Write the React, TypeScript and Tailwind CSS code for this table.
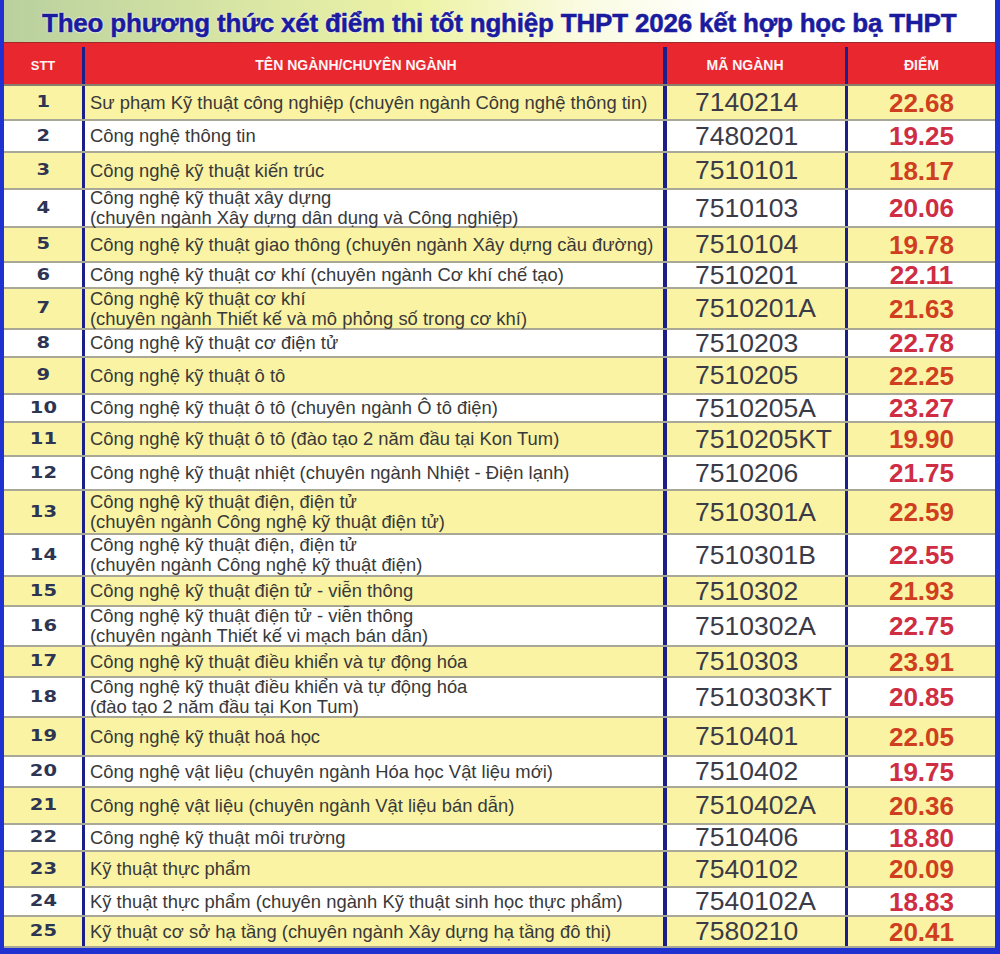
import React from "react";

type Row = {
  stt: string;
  name: string[];
  code: string;
  score: string;
  h: string;
};

const rows: Row[] = [
  { stt: "1", name: ["Sư phạm Kỹ thuật công nghiệp (chuyên ngành Công nghệ thông tin)"], code: "7140214", score: "22.68", h: "h-[35px]" },
  { stt: "2", name: ["Công nghệ thông tin"], code: "7480201", score: "19.25", h: "h-[32px]" },
  { stt: "3", name: ["Công nghệ kỹ thuật kiến trúc"], code: "7510101", score: "18.17", h: "h-[37px]" },
  { stt: "4", name: ["Công nghệ kỹ thuật xây dựng", "(chuyên ngành Xây dựng dân dụng và Công nghiệp)"], code: "7510103", score: "20.06", h: "h-[38px]" },
  { stt: "5", name: ["Công nghệ kỹ thuật giao thông (chuyên ngành Xây dựng cầu đường)"], code: "7510104", score: "19.78", h: "h-[35px]" },
  { stt: "6", name: ["Công nghệ kỹ thuật cơ khí (chuyên ngành Cơ khí chế tạo)"], code: "7510201", score: "22.11", h: "h-[26px]" },
  { stt: "7", name: ["Công nghệ kỹ thuật cơ khí", "(chuyên ngành Thiết kế và mô phỏng số trong cơ khí)"], code: "7510201A", score: "21.63", h: "h-[41px]" },
  { stt: "8", name: ["Công nghệ kỹ thuật cơ điện tử"], code: "7510203", score: "22.78", h: "h-[28px]" },
  { stt: "9", name: ["Công nghệ kỹ thuật ô tô"], code: "7510205", score: "22.25", h: "h-[37px]" },
  { stt: "10", name: ["Công nghệ kỹ thuật ô tô (chuyên ngành Ô tô điện)"], code: "7510205A", score: "23.27", h: "h-[28px]" },
  { stt: "11", name: ["Công nghệ kỹ thuật ô tô (đào tạo 2 năm đầu tại Kon Tum)"], code: "7510205KT", score: "19.90", h: "h-[34px]" },
  { stt: "12", name: ["Công nghệ kỹ thuật nhiệt (chuyên ngành Nhiệt - Điện lạnh)"], code: "7510206", score: "21.75", h: "h-[34px]" },
  { stt: "13", name: ["Công nghệ kỹ thuật điện, điện tử", "(chuyên ngành Công nghệ kỹ thuật điện tử)"], code: "7510301A", score: "22.59", h: "h-[44px]" },
  { stt: "14", name: ["Công nghệ kỹ thuật điện, điện tử", "(chuyên ngành Công nghệ kỹ thuật điện)"], code: "7510301B", score: "22.55", h: "h-[42px]" },
  { stt: "15", name: ["Công nghệ kỹ thuật điện tử - viễn thông"], code: "7510302", score: "21.93", h: "h-[30px]" },
  { stt: "16", name: ["Công nghệ kỹ thuật điện tử - viễn thông", "(chuyên ngành Thiết kế vi mạch bán dẫn)"], code: "7510302A", score: "22.75", h: "h-[40px]" },
  { stt: "17", name: ["Công nghệ kỹ thuật điều khiển và tự động hóa"], code: "7510303", score: "23.91", h: "h-[31px]" },
  { stt: "18", name: ["Công nghệ kỹ thuật điều khiển và tự động hóa", "(đào tạo 2 năm đầu tại Kon Tum)"], code: "7510303KT", score: "20.85", h: "h-[40px]" },
  { stt: "19", name: ["Công nghệ kỹ thuật hoá học"], code: "7510401", score: "22.05", h: "h-[39px]" },
  { stt: "20", name: ["Công nghệ vật liệu (chuyên ngành Hóa học Vật liệu mới)"], code: "7510402", score: "19.75", h: "h-[31px]" },
  { stt: "21", name: ["Công nghệ vật liệu (chuyên ngành Vật liệu bán dẫn)"], code: "7510402A", score: "20.36", h: "h-[37px]" },
  { stt: "22", name: ["Công nghệ kỹ thuật môi trường"], code: "7510406", score: "18.80", h: "h-[27px]" },
  { stt: "23", name: ["Kỹ thuật thực phẩm"], code: "7540102", score: "20.09", h: "h-[36px]" },
  { stt: "24", name: ["Kỹ thuật thực phẩm (chuyên ngành Kỹ thuật sinh học thực phẩm)"], code: "7540102A", score: "18.83", h: "h-[29px]" },
  { stt: "25", name: ["Kỹ thuật cơ sở hạ tầng (chuyên ngành Xây dựng hạ tầng đô thị)"], code: "7580210", score: "20.41", h: "h-[31px]" },
];

export default function App() {
  return (
    <div
      className="w-[1000px] h-[954px] overflow-hidden border-l-4 border-r-[5px] border-b-[6px] border-[#1f31d0] bg-white"
      style={{ fontFamily: '"Liberation Sans", Arial, sans-serif' }}
    >
      {/* Title */}
      <div className="h-[42px] flex items-center pt-[4px] pl-[38px] bg-[linear-gradient(90deg,#b9d09e_0%,#d6e4a4_22%,#edf3a6_42%,#fafbe0_58%,#ffffff_72%)]">
        <div className="text-[26px] font-bold text-[#1b1b9e] whitespace-nowrap tracking-[-0.2px] [-webkit-text-stroke:0.5px_#1b1b9e] [text-shadow:0_0_2px_#ffffff,0_0_2px_#ffffff,0_0_1px_#ffffff]">
          Theo phương thức xét điểm thi tốt nghiệp THPT 2026 kết hợp học bạ THPT
        </div>
      </div>

      {/* Header */}
      <div className="h-[44px] flex bg-[#e8272f] border-t border-[#9e2a2a] border-b-2 border-b-[#8a7f6e] text-[#fff4f4] font-bold text-[14px] pt-[4px]">
        <div className="w-[81px] border-r-[3px] border-[#1c1f8a] flex items-center justify-center text-[13px]">STT</div>
        <div className="w-[582px] border-r-4 border-[#1c1f8a] flex items-center justify-center pr-[36px]">TÊN NGÀNH/CHUYÊN NGÀNH</div>
        <div className="w-[181px] border-r-[3px] border-[#1c1f8a] flex items-center justify-center pr-[22px]">MÃ NGÀNH</div>
        <div className="flex-1 flex items-center justify-center">ĐIỂM</div>
      </div>

      {/* Rows */}
      {rows.map((r, i) => {
        const yellow = i % 2 === 0;
        return (
          <div
            key={r.stt}
            className={`${r.h} flex border-b-2 border-[#a9a795] ${yellow ? "bg-[#faf3a4]" : "bg-white"}`}
          >
            <div className="w-[81px] border-r-[3px] border-[#1c1f8a] flex items-center justify-center">
              <span
                className="inline-block scale-x-[1.3] text-[15px] font-bold text-[#2d3552]"
                style={{ fontFamily: '"DejaVu Sans", sans-serif' }}
              >
                {r.stt}
              </span>
            </div>
            <div className="w-[582px] border-r-4 border-[#1c1f8a] flex flex-col justify-center pl-[5px] text-[18.4px] leading-[20px] text-[#393939] whitespace-nowrap">
              {r.name.map((n) => (
                <div key={n}>{n}</div>
              ))}
            </div>
            <div className="w-[181px] border-r-[3px] border-[#1c1f8a] flex items-center pl-[28px] text-[26.5px] leading-none text-[#3b3b47]">
              {r.code}
            </div>
            <div
              className={`flex-1 flex items-center justify-center text-[26px] leading-none font-bold ${yellow ? "text-[#cf3f1f]" : "text-[#cf2d42]"}`}
            >
              {r.score}
            </div>
          </div>
        );
      })}
    </div>
  );
}
